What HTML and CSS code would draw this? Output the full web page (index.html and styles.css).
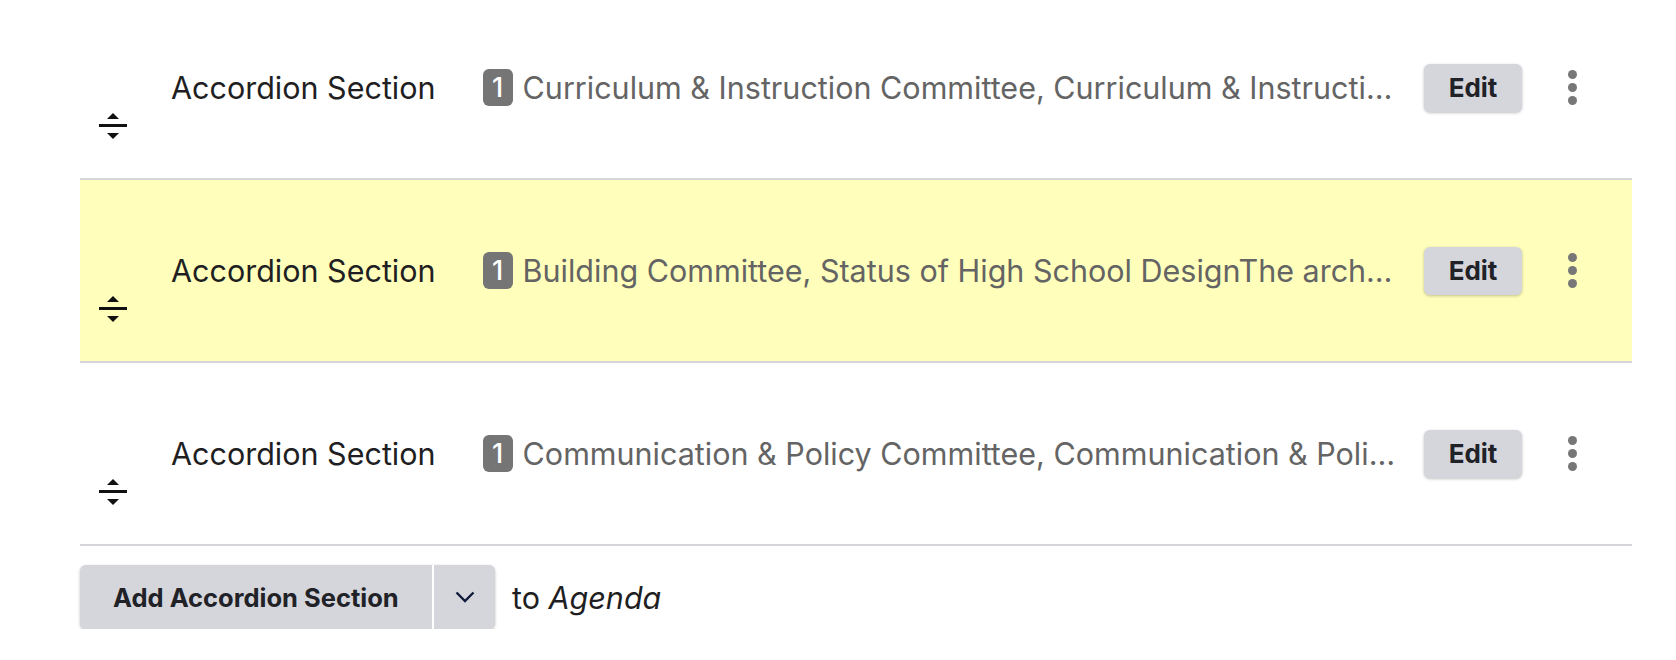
FILE: index.html
```html
<!DOCTYPE html>
<html lang="en">
<head>
  <meta charset="UTF-8" />
  <meta name="viewport" content="width=device-width, initial-scale=1.0"/>
  <title>Agenda - Accordion Sections</title>
  <link rel="stylesheet" href="styles.css">
</head>
<body>
  <div class="agenda-wrap">
    <ul class="section-list">
      <li class="section-row">
        <span class="drag-handle">
          <svg width="28" height="26" viewBox="0 0 28 26"><polygon points="8,6 14,0 20,6" /><rect x="0" y="11" width="28" height="3" /><polygon points="8,20 20,20 14,26" /></svg>
        </span>
        <span class="section-title">Accordion Section</span>
        <span class="section-summary">
          <span class="count-badge">1</span>
          <span class="summary-text">Curriculum &amp; Instruction Committee, Curriculum &amp; Instruction Committee Report on the new elementary reading program</span>
        </span>
        <button class="edit-button">Edit</button>
        <span class="more-menu"><i></i><i></i><i></i></span>
      </li>
      <li class="section-row is-highlighted">
        <span class="drag-handle">
          <svg width="28" height="26" viewBox="0 0 28 26"><polygon points="8,6 14,0 20,6" /><rect x="0" y="11" width="28" height="3" /><polygon points="8,20 20,20 14,26" /></svg>
        </span>
        <span class="section-title">Accordion Section</span>
        <span class="section-summary">
          <span class="count-badge">1</span>
          <span class="summary-text">Building Committee, Status of High School DesignThe architect will present the latest design drawings</span>
        </span>
        <button class="edit-button">Edit</button>
        <span class="more-menu"><i></i><i></i><i></i></span>
      </li>
      <li class="section-row">
        <span class="drag-handle">
          <svg width="28" height="26" viewBox="0 0 28 26"><polygon points="8,6 14,0 20,6" /><rect x="0" y="11" width="28" height="3" /><polygon points="8,20 20,20 14,26" /></svg>
        </span>
        <span class="section-title">Accordion Section</span>
        <span class="section-summary">
          <span class="count-badge">1</span>
          <span class="summary-text">Communication &amp; Policy Committee, Communication &amp; Policy Committee Report on board policy updates</span>
        </span>
        <button class="edit-button">Edit</button>
        <span class="more-menu"><i></i><i></i><i></i></span>
      </li>
    </ul>

    <div class="add-bar">
      <div class="split-button">
        <button class="split-main">Add Accordion Section</button>
        <button class="split-toggle">
          <svg width="20" height="12" viewBox="0 0 20 12"><polyline points="1.5,1.5 10,10 18.5,1.5" fill="none" stroke="#111a3a" stroke-width="2.4" /></svg>
        </button>
      </div>
      <span class="add-target">to <em>Agenda</em></span>
    </div>
  </div>
</body>
</html>
```

FILE: styles.css
```css
body {
  font-family: 'Inter', 'Helvetica Neue', Arial, sans-serif;
  background-color: #ffffff;
  margin: 0;
  padding: 0;
  color: #1f1f23;
}

.agenda-wrap {
  width: 1552px;
  margin-left: 80px;
}

.section-list {
  list-style: none;
  margin: -3px 0 0;
  padding: 0;
}

.section-row {
  display: flex;
  align-items: center;
  height: 181px;
  padding: 0 40px 0 19px;
  border-bottom: 2px solid #d6d6da;
}

.section-row.is-highlighted {
  background-color: #ffffbb;
}

.drag-handle {
  display: flex;
  width: 28px;
  margin-top: 76px;
  margin-right: 44px;
  fill: #111111;
}

.section-title {
  font-size: 30.5px;
  color: #1f1f23;
  white-space: nowrap;
  margin-right: 47px;
}

.section-summary {
  flex: 1;
  min-width: 0;
  display: flex;
  align-items: center;
  margin-right: 26px;
}

.count-badge {
  flex: none;
  width: 30px;
  height: 37px;
  border-radius: 6px;
  background-color: #757575;
  color: #ffffff;
  font-size: 27px;
  font-weight: 500;
  line-height: 37px;
  text-align: center;
  margin-right: 10px;
}

.summary-text {
  font-size: 30.5px;
  color: #646464;
  white-space: nowrap;
  overflow: hidden;
  text-overflow: ellipsis;
}

.edit-button {
  flex: none;
  width: 98px;
  height: 48px;
  border: none;
  border-radius: 6px;
  background-color: #d5d6db;
  box-shadow: 0 1px 3px rgba(0, 0, 0, 0.25);
  font-family: inherit;
  font-size: 26px;
  font-weight: 700;
  color: #212227;
  cursor: pointer;
}

.more-menu {
  flex: none;
  width: 40px;
  margin-left: 30px;
  display: flex;
  flex-direction: column;
  align-items: center;
  gap: 4px;
}

.more-menu i {
  width: 9px;
  height: 9px;
  border-radius: 50%;
  background-color: #777777;
}

.add-bar {
  display: flex;
  align-items: center;
  margin-top: 19px;
}

.split-button {
  display: flex;
  height: 64px;
  border-radius: 6px;
  background-color: #d5d6db;
  box-shadow: 0 1px 3px rgba(0, 0, 0, 0.25);
}

.split-main,
.split-toggle {
  border: none;
  background: none;
  font-family: inherit;
  cursor: pointer;
}

.split-main {
  width: 354px;
  padding: 0 0 0 33px;
  text-align: left;
  font-size: 25.5px;
  font-weight: 700;
  color: #212227;
  border-right: 2px solid #ffffff;
}

.split-toggle {
  width: 61px;
  display: flex;
  align-items: center;
  justify-content: center;
}

.add-target {
  margin-left: 17px;
  font-size: 30.5px;
  color: #1f1f23;
}
```
